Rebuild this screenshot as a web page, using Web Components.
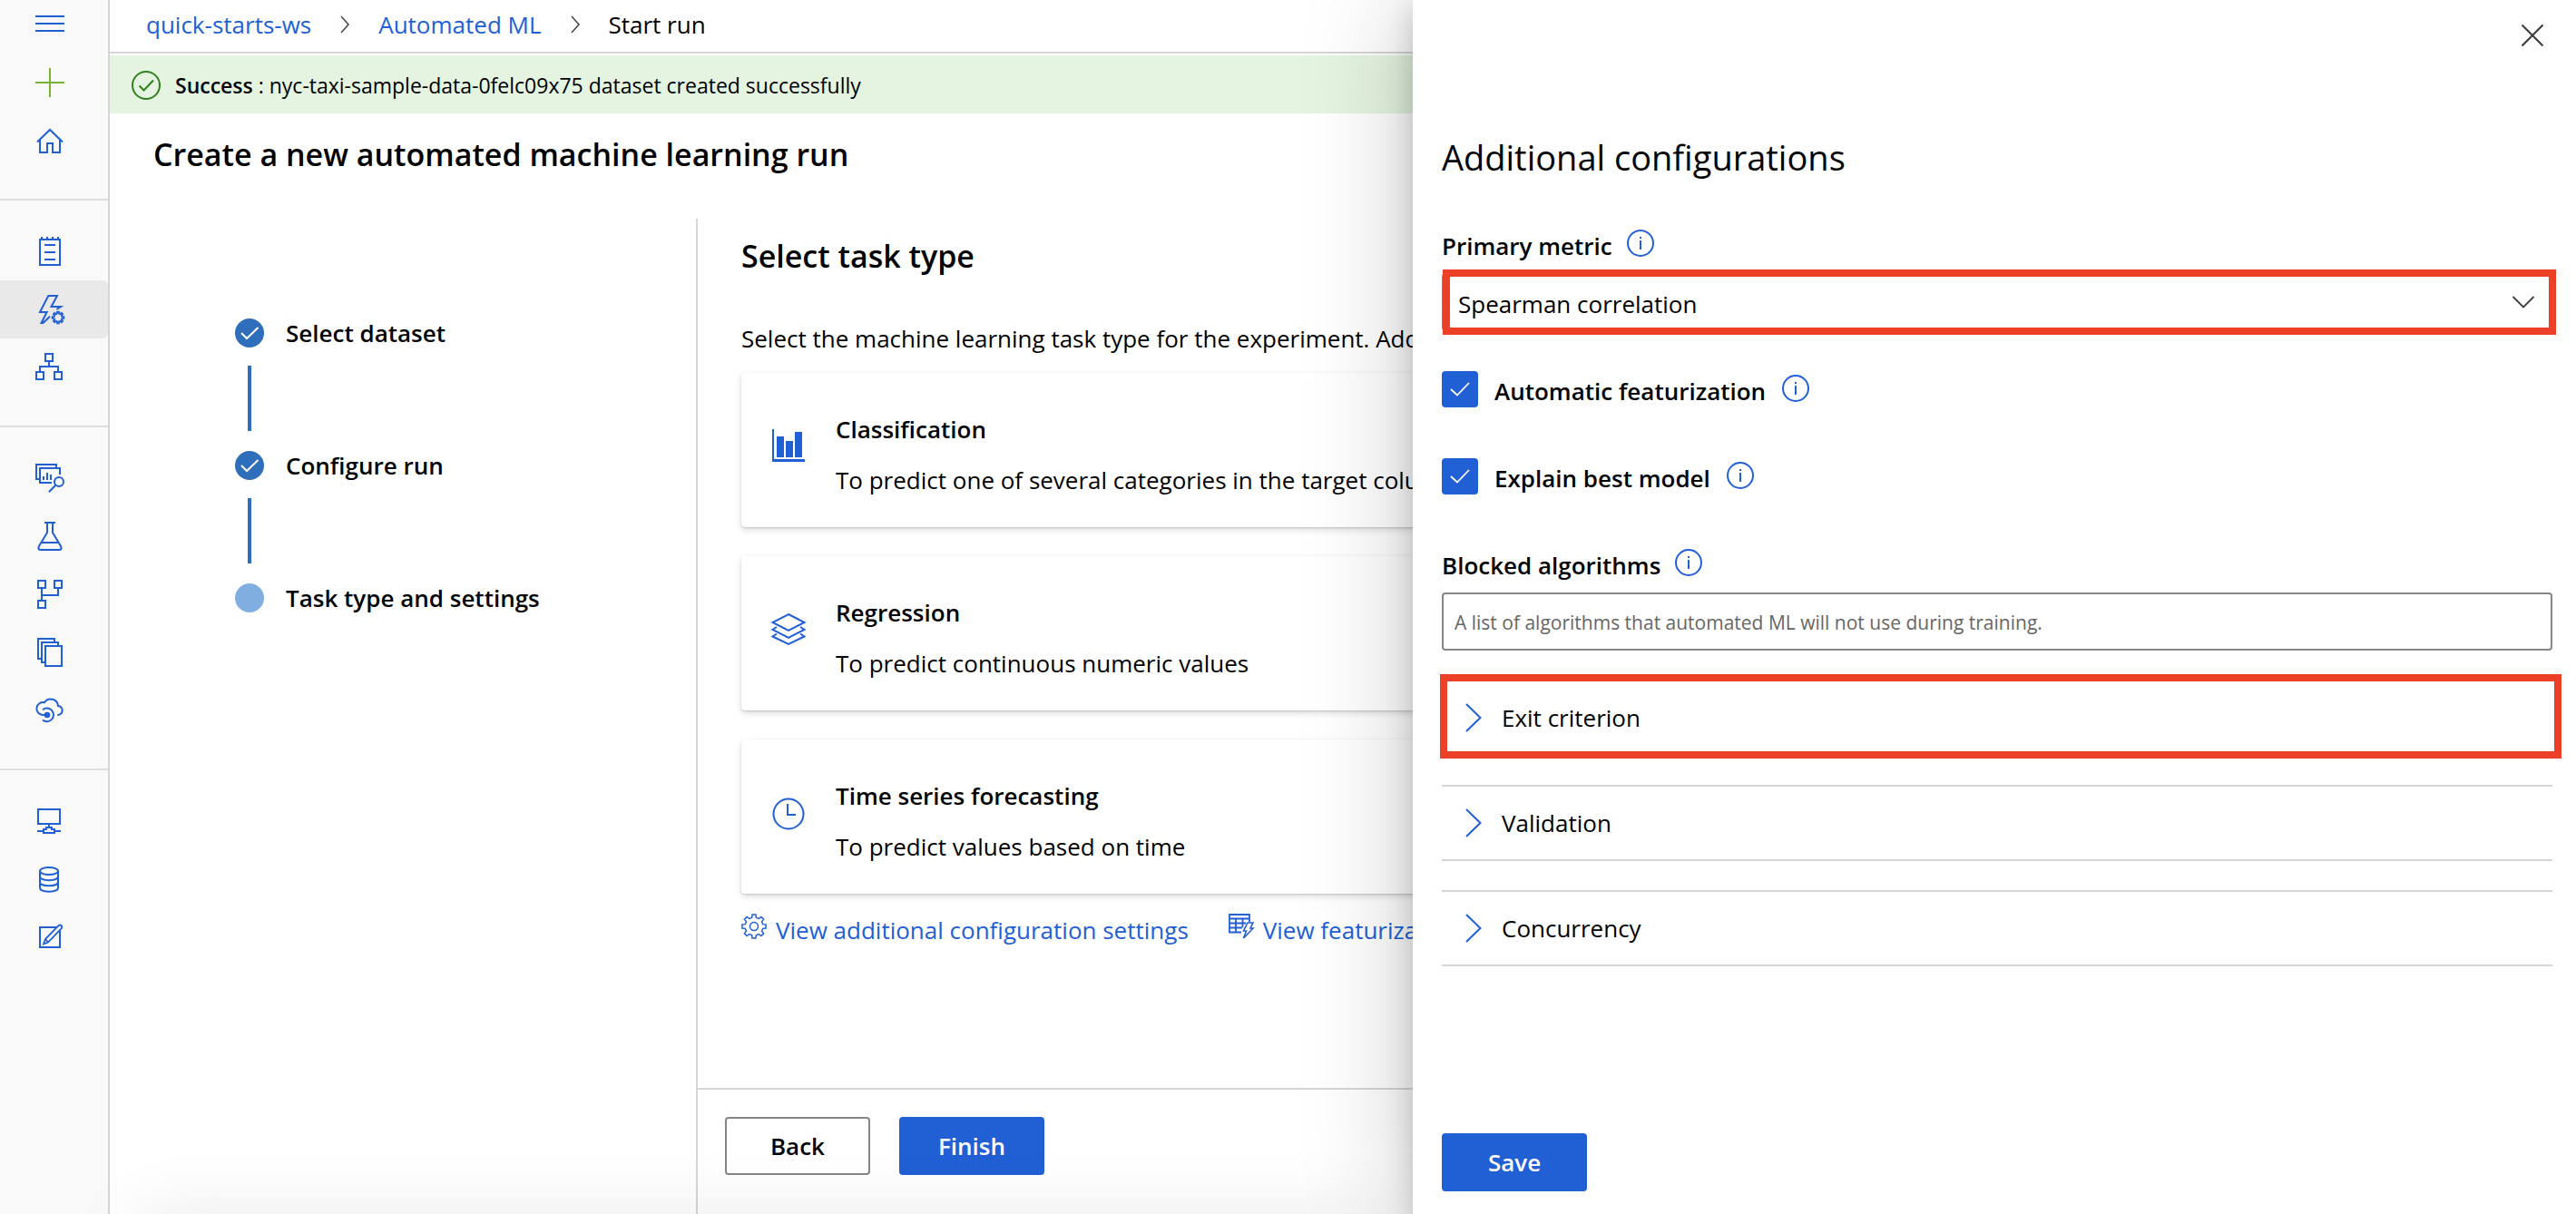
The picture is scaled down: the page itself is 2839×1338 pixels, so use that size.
<!DOCTYPE html>
<html lang="en">
<head>
<meta charset="utf-8">
<title>Create a new automated machine learning run</title>
<style>
  :root {
    --blue: #215fd4;
    --line: #d6d6d6;
    --field: #868686;
    --mark: #ec4128;
  }
  html, body { height: 100%; }
  body {
    margin: 0;
    overflow: hidden;
    background: #fff;
    color: #000;
    font: 400 26px/36px "Open Sans", "Noto Sans", sans-serif;
  }
</style>
</head>
<body>
<ml-studio></ml-studio>

<script>
/* Outline of a cog: `teeth` flat-topped teeth between radii `inner` and `outer`. */
function cog(cx, cy, inner, outer, teeth) {
  const step = Math.PI * 2 / teeth, pts = [];
  for (let i = 0; i < teeth; i++) {
    const a = i * step - Math.PI / 2;
    for (const [f, r] of [[-0.3, inner], [-0.19, outer], [0.19, outer], [0.3, inner]]) {
      pts.push((cx + Math.cos(a + f * step) * r).toFixed(2) + ' ' + (cy + Math.sin(a + f * step) * r).toFixed(2));
    }
  }
  return 'M' + pts.join('L') + 'Z';
}

/* name: [width, height, svg body]; strokes are 2px in currentColor unless set. */
const ICONS = {
  menu: [32, 32, '<path d="M0 8H32M0 16H32M0 24H32"/>'],
  plus: [32, 32, '<path d="M16 0V32M0 16H32"/>'],
  home: [32, 32, '<path d="M5 15V29H13V19H19V29H27V15M2 17.5L16 4 30 17.5"/>'],
  notebook: [32, 32, '<path d="M5 3H27V31H5ZM7 0V3M13 0V3M19 0V3M25 0V3M10 9H22M10 17H22M10 25H22"/>'],
  automl: [32, 32, '<path d="M23.5 16L28 13H17.5L24 1H14.3L5 19H12.7L6.5 31H8.5L16 23.7"/><path stroke-width="1.8" d="' + cog(25, 25, 4.4, 6.4, 8) + '"/>'],
  designer: [32, 32, '<path d="M11 1H19V9H11ZM1 21H9V29H1ZM21 21H29V29H21ZM15 10V15M5 20V15H25V20"/>'],
  datasets: [32, 32, '<path d="M23 4V1H1V17H4M27 12V5H5V21H18M9 14V18M13 10V18M17 12V18"/><circle cx="26" cy="20" r="5"/><path d="M22.5 23.5L15 31.3"/>'],
  flask: [32, 32, '<path d="M10 1H22M13 1V12L4 27Q2.200 31 6 31H26Q29.800 31 28 27L19 12V1M7 23H25"/>'],
  pipeline: [32, 32, '<path d="M3 1H11V9H3ZM21 1H29V9H21ZM3 23H11V31H3ZM7 10V22M7 17H25V10"/>'],
  models: [32, 32, '<path d="M11 9H29V31H11ZM10 27H7V5H25V8M6 23H3V1H21V4"/>'],
  endpoints: [32, 32, '<path d="M13 21H8A7 7 0 1 1 10 7.200A8.200 8.200 0 0 1 25 11A5 5 0 1 1 24.300 21M8 15.300A7.300 7.300 0 1 1 8 26.500"/><circle cx="13" cy="21" r="3.300" fill="currentColor" stroke="none"/>'],
  compute: [32, 32, '<path d="M3 3H27V19H3ZM15 19V22M2 27H9M21 27H28M9 29V25H12V23H18V25H21V29Z"/>'],
  datastore: [32, 32, '<ellipse cx="15" cy="7" rx="10" ry="4"/><path d="M5 7V25.500C5 31 25 31 25 25.500V7M5 13C5 18.500 25 18.500 25 13M5 19.200C5 24.700 25 24.700 25 19.200"/>'],
  labeling: [32, 32, '<path d="M24 5H5V27H27V9"/><path stroke-width="1.800" d="M9 23.500L11 18 25.500 3.200Q27 1.800 28.600 3.200Q30 4.800 28.600 6.300L14 21.500ZM11 18L14 21.500"/>'],
  crumb: [10, 20, '<path stroke-width="1.500" d="M1 1L9 10 1 19"/>'],
  success: [32, 32, '<circle cx="16" cy="16" r="15"/><path d="M8.500 16.500L13.500 21.500 24 10.500"/>'],
  tick: [32, 32, '<path d="M7 16L13 22 25.500 10"/>'],
  boxtick: [24, 24, '<path stroke-width="1.800" d="M2 12L9 18.500 22 5"/>'],
  bars: [40, 40, '<path fill="currentColor" stroke="none" d="M2 2H4V35H38V38H2ZM7 10H15V33H7ZM17 15H25V33H17ZM27 5H35V33H27Z"/>'],
  layers: [40, 40, '<path d="M20 4L37.500 13 20 22 2.500 13ZM7 18L2.500 21 20 30 37.500 21 33 18M7 25.500L2.500 28.500 20 37 37.500 28.500 33 25.500"/>'],
  clock: [40, 40, '<circle cx="20" cy="22" r="16.500"/><path d="M19 11V23H28"/>'],
  gear: [28, 28, '<path stroke-width="1.500" d="' + cog(14, 14, 10, 13.2, 8) + '"/><circle cx="14" cy="14" r="4.500" stroke-width="1.500"/>'],
  tablebolt: [28, 28, '<path stroke-width="1.800" d="M14 20.500H1V1H23V9M1 5.500H23M1 10.500H19M1 15.500H15M8 5.500V20.500M15.500 5.500V15"/><path stroke-width="1.600" d="M21 10H27L24 16H27L16.500 27 19.500 19H16.500Z"/>'],
  info: [30, 30, '<circle cx="15" cy="15" r="14"/><path d="M15 12V22M15 8V10"/>'],
  close: [24, 24, '<path d="M0.500 0.500L23.500 23.500M23.500 0.500L0.500 23.500"/>'],
  down: [24, 14, '<path stroke-width="1.800" d="M0.500 1L12 12.500 23.500 1"/>'],
  expand: [18, 32, '<path d="M1 1L16.500 16 1 31"/>']
};

/* Registers an element whose open shadow root is cloned from one template. */
function define(tag, css, html) {
  const tpl = document.createElement('template');
  tpl.innerHTML = '<style>*{box-sizing:border-box}' + css + '</style>' + html;
  customElements.define(tag, class extends HTMLElement {
    constructor() {
      super();
      this.attachShadow({ mode: 'open' }).append(tpl.content.cloneNode(true));
    }
  });
}

class UiIcon extends HTMLElement {
  connectedCallback() {
    const root = this.shadowRoot || this.attachShadow({ mode: 'open' });
    const [w, h, body] = ICONS[this.getAttribute('name')];
    root.innerHTML = `<style>:host{display:block;flex:none}svg{display:block;overflow:visible}</style>
      <svg width="${w}" height="${h}" viewBox="0 0 ${w} ${h}" fill="none" stroke="currentColor" stroke-width="2" aria-hidden="true">${body}</svg>`;
  }
}
customElements.define('ui-icon', UiIcon);

class NavItem extends HTMLElement {
  connectedCallback() {
    const root = this.shadowRoot || this.attachShadow({ mode: 'open' });
    root.innerHTML = `<style>
        :host{display:block;color:var(--blue)}
        a{display:flex;align-items:center;height:64px;padding-left:39px;color:inherit}
        :host([current]) a{background:#e9e9e9;border-radius:0 6px 6px 0}
        :host([create]){color:#76b52f}
      </style>
      <a href="#" aria-label="${this.getAttribute('label')}"><ui-icon name="${this.getAttribute('icon')}"></ui-icon></a>`;
  }
}
customElements.define('nav-item', NavItem);

define('nav-rail', `
  :host{display:flex;flex-direction:column;flex:none;width:121px;background:#f9f9f9;border-right:2px solid var(--line);box-sizing:border-box}
  button{display:flex;align-items:center;height:59px;padding:0 0 7px 39px;border:0;background:none;color:var(--blue)}
  nav{padding:24px 0 32px;border-top:2px solid #dedede}
  nav.first{padding-top:0;border-top:0}
`, `
  <button aria-label="Menu"><ui-icon name="menu"></ui-icon></button>
  <nav class="first" aria-label="General">
    <nav-item create icon="plus" label="New"></nav-item>
    <nav-item icon="home" label="Home"></nav-item>
  </nav>
  <nav aria-label="Author">
    <nav-item icon="notebook" label="Notebooks"></nav-item>
    <nav-item current icon="automl" label="Automated ML"></nav-item>
    <nav-item icon="designer" label="Designer"></nav-item>
  </nav>
  <nav aria-label="Assets">
    <nav-item icon="datasets" label="Datasets"></nav-item>
    <nav-item icon="flask" label="Experiments"></nav-item>
    <nav-item icon="pipeline" label="Pipelines"></nav-item>
    <nav-item icon="models" label="Models"></nav-item>
    <nav-item icon="endpoints" label="Endpoints"></nav-item>
  </nav>
  <nav aria-label="Manage">
    <nav-item icon="compute" label="Compute"></nav-item>
    <nav-item icon="datastore" label="Datastores"></nav-item>
    <nav-item icon="labeling" label="Data labeling"></nav-item>
  </nav>
`);

define('bread-crumbs', `
  :host{display:block;border-bottom:2px solid var(--line)}
  nav{display:flex;align-items:center;gap:32px;height:57px;padding:0 40px 3px;white-space:nowrap}
  a{color:var(--blue);text-decoration:none}
  ui-icon{color:#444}
`, `
  <nav aria-label="Breadcrumb">
    <a href="#">quick-starts-ws</a><ui-icon name="crumb"></ui-icon>
    <a href="#">Automated ML</a><ui-icon name="crumb"></ui-icon>
    <span>Start run</span>
  </nav>
`);

define('status-banner', `
  :host{display:flex;align-items:center;gap:16px;height:64px;margin-top:2px;padding:2px 24px 0;box-sizing:border-box;background:#e5f4e0;font-size:23px;line-height:32px;white-space:nowrap}
  ui-icon{color:#317f1f}
  ::slotted(b){font-weight:600}
`, `<ui-icon name="success"></ui-icon><div><slot></slot></div>`);

define('wizard-step', `
  :host{display:block;font-weight:600;line-height:32px}
  .row{display:flex;gap:24px}
  .dot{width:32px;height:32px;border-radius:50%;background:#2f6eba;color:#fff}
  :host([current]) .dot{background:#80aee1}
  :host([current]) ui-icon,:host([current]) .bar{display:none}
  .bar{width:4px;height:72px;margin:20px 14px 22px;background:#2f6eba}
`, `
  <div class="row"><span class="dot"><ui-icon name="tick"></ui-icon></span><slot></slot></div>
  <div class="bar"></div>
`);

define('task-card', `
  :host{display:flex;align-items:flex-start;gap:32px;padding:34px 32px 24px;border-radius:4px;background:#fff;line-height:56px;white-space:nowrap;
    box-shadow:0 3px 7px rgba(0,0,0,.14),0 1px 2px rgba(0,0,0,.14)}
  slot[name=icon]{display:block;margin-top:26px;color:var(--blue)}
  slot[name=title]{display:block;font-weight:600}
`, `<slot name="icon"></slot><div><slot name="title"></slot><slot></slot></div>`);

define('link-action', `
  :host{display:block}
  a{display:flex;gap:10px;color:var(--blue);text-decoration:none;white-space:nowrap}
`, `<a href="#"><slot name="icon"></slot><slot></slot></a>`);

define('push-button', `
  :host{display:block;width:160px}
  button{display:block;width:100%;height:64px;padding:0;border:2px solid var(--blue);border-radius:4px;background:var(--blue);color:#fff;font:inherit;font-weight:600}
  :host([plain]) button{border-color:var(--field);background:#fff;color:#000}
`, `<button type="button"><slot></slot></button>`);

define('run-wizard', `
  :host{display:flex;flex:1;min-height:0}
  .steps{flex:none;width:646px;padding:110px 0 0 138px}
  .task{display:flex;flex-direction:column;flex:1;min-width:0;border-left:2px solid var(--line)}
  .body{flex:1;padding:16px 48px 0}
  h2{margin:0 0 48px;font-size:34px;line-height:50px;font-weight:600}
  p{margin:0 0 20px;white-space:nowrap}
  .cards{display:flex;flex-direction:column;gap:32px}
  .links{display:flex;gap:44px;margin-top:22px}
  footer{display:flex;gap:32px;padding:30px 30px 43px;border-top:2px solid var(--line)}
`, `
  <div class="steps">
    <wizard-step>Select dataset</wizard-step>
    <wizard-step>Configure run</wizard-step>
    <wizard-step current>Task type and settings</wizard-step>
  </div>
  <section class="task">
    <div class="body">
      <h2>Select task type</h2>
      <p>Select the machine learning task type for the experiment. Additional</p>
      <div class="cards">
        <task-card><ui-icon slot="icon" name="bars"></ui-icon><span slot="title">Classification</span>To predict one of several categories in the target column</task-card>
        <task-card><ui-icon slot="icon" name="layers"></ui-icon><span slot="title">Regression</span>To predict continuous numeric values</task-card>
        <task-card><ui-icon slot="icon" name="clock"></ui-icon><span slot="title">Time series forecasting</span>To predict values based on time</task-card>
      </div>
      <div class="links">
        <link-action><ui-icon slot="icon" name="gear"></ui-icon>View additional configuration settings</link-action>
        <link-action><ui-icon slot="icon" name="tablebolt"></ui-icon>View featurization</link-action>
      </div>
    </div>
    <footer><push-button plain>Back</push-button><push-button>Finish</push-button></footer>
  </section>
`);

define('info-tip', `
  :host{display:block;flex:none}
  button{display:block;padding:0;border:0;background:none;color:var(--blue)}
`, `<button type="button" aria-label="More information"><ui-icon name="info"></ui-icon></button>`);

define('accordion-item', `
  :host{display:block;position:relative}
  button{display:flex;align-items:center;gap:22px;width:100%;height:84px;padding:0 26px;border:solid var(--line);border-width:2px 0;background:none;color:inherit;font:inherit;text-align:left}
  ui-icon{color:var(--blue)}
`, `<button type="button" aria-expanded="false"><ui-icon name="expand"></ui-icon><slot></slot></button><slot name="mark"></slot>`);

define('config-panel', `
  :host{position:absolute;top:0;right:0;bottom:0;display:flex;flex-direction:column;width:1282px;max-width:100%;padding:15px 26px 25px 32px;box-sizing:border-box;background:#fff;
    box-shadow:0 0 115px rgba(0,0,0,.22),0 10px 29px rgba(0,0,0,.18)}
  .close{display:grid;place-items:center;align-self:flex-end;flex:none;width:48px;height:48px;margin-right:-2px;padding:0;border:0;background:none;color:#3c3c3c}
  h2{margin:85px 0 55px;font-size:38px;line-height:50px;font-weight:400}
  .label{display:flex;align-items:flex-start;gap:16px;margin-bottom:12px;font-weight:600}
  .control{position:relative}
  select,input[type=text]{display:block;width:100%;height:64px;border:2px solid var(--field);border-radius:4px;background:#fff;color:#000;font:inherit}
  select{appearance:none;padding:3px 50px 0 16px}
  input[type=text]{padding:2px 12px 0;font-size:21px}
  input::placeholder{color:#666;opacity:1}
  .arrow{position:absolute;right:20px;top:25px;color:#3c3c3c;pointer-events:none}
  .mark{position:absolute;border:8px solid var(--mark);pointer-events:none}
  .control .mark{inset:-4px -4px -4px 1px}
  accordion-item .mark{inset:-6px -10px -3px -2px}
  .checks{display:flex;flex-direction:column;gap:52px;margin:44px 0 56px}
  .check{display:flex;align-items:flex-start;font-weight:600;line-height:44px}
  .box{display:grid;margin-right:18px}
  .box>*{grid-area:1/1;place-self:center}
  input[type=checkbox]{appearance:none;width:40px;height:40px;margin:0;border-radius:4px;background:var(--blue)}
  .box ui-icon{color:#fff;pointer-events:none}
  .check info-tip{margin:4px 0 0 18px}
  .groups{display:flex;flex-direction:column;gap:32px;margin-top:32px}
  push-button{margin-top:auto}
`, `
  <button class="close" type="button" aria-label="Close"><ui-icon name="close"></ui-icon></button>
  <h2>Additional configurations</h2>
  <div class="label"><label for="metric">Primary metric</label><info-tip></info-tip></div>
  <div class="control">
    <select id="metric"><option>Spearman correlation</option></select>
    <ui-icon class="arrow" name="down"></ui-icon>
    <div class="mark"></div>
  </div>
  <div class="checks">
    <div class="check"><span class="box"><input type="checkbox" id="feat" checked><ui-icon name="boxtick"></ui-icon></span><label for="feat">Automatic featurization</label><info-tip></info-tip></div>
    <div class="check"><span class="box"><input type="checkbox" id="explain" checked><ui-icon name="boxtick"></ui-icon></span><label for="explain">Explain best model</label><info-tip></info-tip></div>
  </div>
  <div class="label"><label for="blocked">Blocked algorithms</label><info-tip></info-tip></div>
  <input type="text" id="blocked" placeholder="A list of algorithms that automated ML will not use during training.">
  <div class="groups">
    <accordion-item>Exit criterion<div class="mark" slot="mark"></div></accordion-item>
    <accordion-item>Validation</accordion-item>
    <accordion-item>Concurrency</accordion-item>
  </div>
  <push-button>Save</push-button>
`);

define('ml-studio', `
  :host{display:flex;position:relative;height:100%;min-height:1338px;overflow:hidden}
  main{display:flex;flex-direction:column;flex:1;min-width:0}
  h1{margin:0;padding:20px 48px 46px;font-size:34px;line-height:50px;font-weight:600}
  .shade{position:absolute;left:150px;right:0;top:100%;height:60px;box-shadow:0 0 80px rgba(0,0,0,.09);pointer-events:none}
`, `
  <nav-rail></nav-rail>
  <main>
    <bread-crumbs></bread-crumbs>
    <status-banner><b>Success</b> : nyc-taxi-sample-data-0felc09x75 dataset created successfully</status-banner>
    <h1>Create a new automated machine learning run</h1>
    <run-wizard></run-wizard>
  </main>
  <div class="shade"></div>
  <config-panel></config-panel>
`);
</script>
</body>
</html>
